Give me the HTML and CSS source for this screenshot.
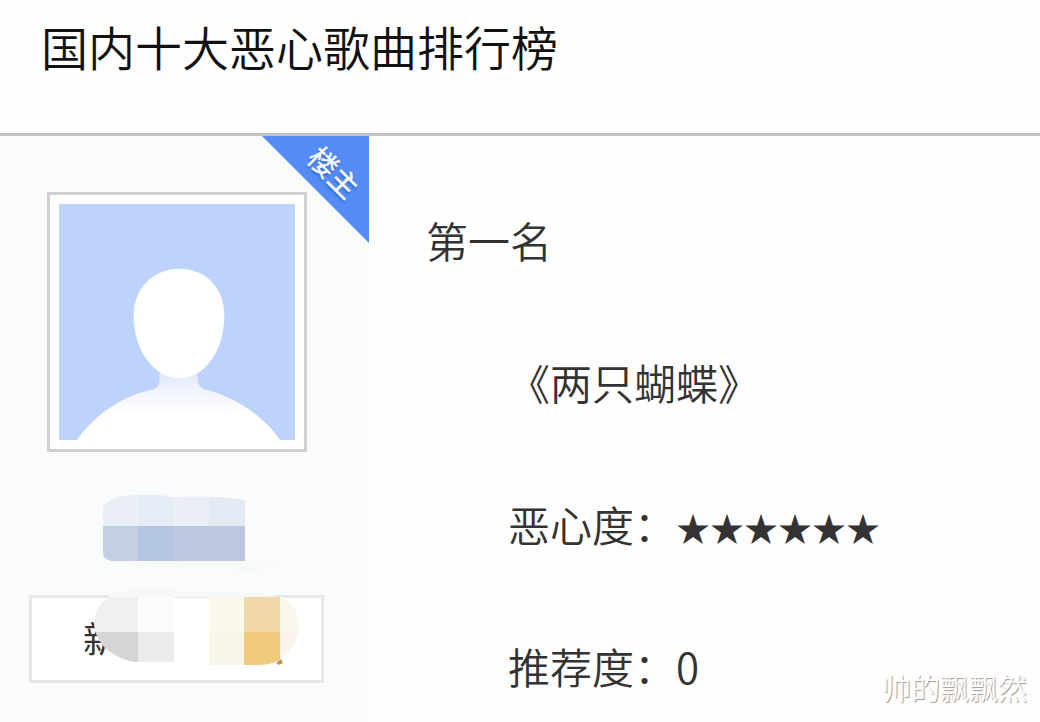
FILE: index.html
```html
<!DOCTYPE html>
<html lang="zh-CN">
<head>
<meta charset="utf-8">
<title>国内十大恶心歌曲排行榜</title>
<link rel="stylesheet" href="styles.css">
</head>
<body>
<header class="thread-header">
  <h1 class="thread-title">国内十大恶心歌曲排行榜</h1>
</header>
<main class="post">
  <aside class="author">
    <div class="owner"><span class="owner-text">楼主</span></div>
    <div class="avatar">
      <svg class="avatar-image" viewBox="0 0 237 237" role="img" aria-label="头像">
        <defs>
          <linearGradient id="body" x1="0" y1="0" x2="0" y2="1">
            <stop offset="0" stop-color="#dce7fb"/>
            <stop offset="0.3" stop-color="#f0f4fd"/>
            <stop offset="0.65" stop-color="#ffffff"/>
          </linearGradient>
        </defs>
        <rect width="237" height="237" fill="#bed3fc"/>
        <path d="M18 237C38 209 66 192 95 186Q101 184 101 176V166H139V176Q139 183 146 186C177 194 205 212 222 237Z" fill="url(#body)"/>
        <path d="M121 65C147 65 166 84 166 112C166 148 146 175 121 175C96 175 75 148 75 112C75 84 95 65 121 65Z" fill="#fff"/>
      </svg>
    </div>
    <svg class="name" viewBox="0 0 180 80" aria-hidden="true">
      <defs><clipPath id="nameShape"><path d="M0 14Q8 2 35 2Q55 1 70 4Q110 2 142 7V68H8Q0 66 0 60Z"/></clipPath></defs>
      <path d="M8 67H179Q166 79 145 79Q100 76 60 74Q25 74 8 67Z" fill="#f8fafa"/>
      <g clip-path="url(#nameShape)">
        <path d="M0 0H36V33H0Z" fill="#eaeff6"/><path d="M35 0H71V33H35Z" fill="#e6ecf5"/>
        <path d="M71 0H107V33H71Z" fill="#eaeef5"/><path d="M106 0H142V33H106Z" fill="#e4eaf4"/>
        <path d="M0 33H36V68H0Z" fill="#c4cfe5"/><path d="M35 33H71V68H35Z" fill="#b4c6e2"/>
        <path d="M71 33H142V68H71Z" fill="#bcc8e2"/>
      </g>
    </svg>
    <div class="badge">
      <span class="badge-text">新</span>
      <svg class="badge-cover" viewBox="0 0 205 78" aria-hidden="true">
        <defs><clipPath id="badgeShape"><path d="M14 8H190Q205 20 205 38Q203 57 188 69Q180 76 165 76H115V74H50Q26 73 10 58Q0 46 0 34Q1 18 14 8Z"/></clipPath></defs>
        <path d="M11 54H50V78H11Z" fill="#fff"/>
        <path d="M14 8Q18 2 40 1Q75 -1 98 3Q160 0 174 5L184 8Z" fill="#f7f9f8"/>
        <g clip-path="url(#badgeShape)">
          <path d="M0 8H44V43H0Z" fill="#f0f0f0"/><path d="M44 8H80V43H44Z" fill="#fbfbfb"/>
          <path d="M0 43H44V73H0Z" fill="#d5d5d5"/><path d="M44 43H80V73H44Z" fill="#ebebeb"/>
          <path d="M115 8H151V43H115Z" fill="#fdf8ee"/><path d="M115 43H151V76H115Z" fill="#faf5e9"/>
          <path d="M150 8H186V43H150Z" fill="#f0d9a6"/><path d="M150 43H186V76H150Z" fill="#f0cb7d"/>
          <path d="M186 8H205V43H186Z" fill="#fcf7ed"/><path d="M186 43H205V76H186Z" fill="#faf4ec"/>
        </g>
        <path d="M182 74L187 70L189 74L185 76Z" fill="#b9995b"/>
      </svg>
    </div>
  </aside>
  <article class="content">
    <p class="rank">第一名</p>
    <p class="detail">《两只蝴蝶》</p>
    <p class="detail">恶心度：<span class="stars">★★★★★★</span></p>
    <p class="detail">推荐度：0</p>
  </article>
</main>
<div class="watermark">帅的飘飘然</div>
</body>
</html>
```
FILE: styles.css
```css
* { box-sizing: border-box; }
body {
  margin: 0;
  min-height: 100vh;
  display: flex;
  flex-direction: column;
  background: #fefefe;
  color: #333;
  font-family: "Noto Sans CJK SC", sans-serif;
  font-weight: 350;
}
.thread-header {
  padding: 12px 41px 54px;
  border-bottom: 3px solid #c1c2c4;
}
.thread-title {
  margin: 0;
  font-size: 47px;
  line-height: 67px;
  font-weight: 350;
  color: #111;
}
.post { flex: 1; display: flex; }
.author {
  position: relative;
  flex: 0 0 369px;
  padding: 56px 29px 0;
  background: #fafbfd;
}
.owner {
  position: absolute;
  top: 0;
  right: 0;
  width: 107px;
  height: 107px;
  background: #548bf5;
  clip-path: polygon(0 0, 100% 0, 100% 100%);
}
.owner-text {
  position: absolute;
  top: 15px;
  left: 44px;
  font-size: 29px;
  line-height: 40px;
  font-weight: 500;
  color: #f0f6ff;
  text-shadow: 1px 2px 2px #3c6fc9;
  transform: rotate(45deg);
}
.avatar {
  width: 260px;
  margin-left: 18px;
  padding: 9px;
  border: 3px solid #d0d0d0;
  background: #fff;
}
.avatar-image { display: block; width: 100%; }
.name {
  display: block;
  width: 180px;
  height: 80px;
  margin: 41px 0 0 74px;
}
.badge {
  position: relative;
  width: 295px;
  height: 88px;
  margin-top: 22px;
  padding: 15px 51px;
  border: 3px solid #e6e7e9;
  background: #fff;
}
.badge-text {
  display: block;
  font-size: 36px;
  line-height: 48px;
  font-weight: 400;
}
.badge-cover {
  position: absolute;
  top: -9px;
  left: 62px;
  width: 205px;
  height: 78px;
}
.content {
  flex: 1;
  padding: 33px 0 0 57px;
  font-size: 42px;
  line-height: 142px;
}
.content p { margin: 0; }
.content .detail { padding-left: 82px; }
.stars { font-size: 34px; line-height: 1; }
.watermark {
  position: absolute;
  right: 13px;
  bottom: 14px;
  font-size: 29px;
  line-height: 42px;
  color: #fff;
  text-shadow: 1px 1px 1px #999;
}
```
